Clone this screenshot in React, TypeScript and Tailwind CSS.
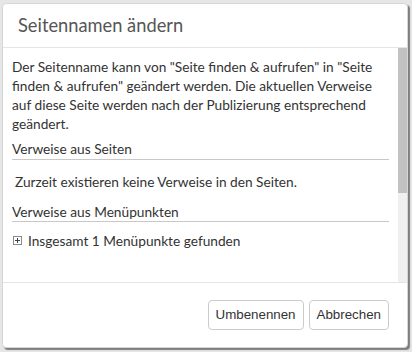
// Rename page dialog: header, scrollable body with reference lists, footer buttons.
export default function App() {
  return (
    <div className="h-[352px] w-[412px] bg-[#e6e6e6] pl-[2px] pt-[3px] font-['Lato',sans-serif]">
      <div className="flex h-[345px] w-[406px] flex-col rounded-[4px] border border-[#d6d6d6] bg-white shadow-[2px_2px_1px_rgba(0,0,0,0.45)]">
        <div className="flex h-[44px] shrink-0 items-center border-b border-[#e5e5e5] px-[15px]">
          <h1 className="text-[18.3px] font-normal text-[#555]">Seitennamen ändern</h1>
        </div>

        <div className="flex h-[235px] shrink-0 overflow-hidden border-b border-[#e5e5e5]">
          <div className="min-w-0 flex-1 pl-[9px] pr-[9px] pt-[9px] text-[13.7px] leading-[19px] text-[#333]">
            <p>
              Der Seitenname kann von "Seite finden &amp; aufrufen" in "Seite finden &amp; aufrufen" geändert werden. Die aktuellen Verweise auf diese Seite werden nach der Publizierung entsprechend geändert.
            </p>
            <h2 className="mt-[6px] border-b border-[#c8c8c8] pb-[1px] text-[13.7px] font-normal">Verweise aus Seiten</h2>
            <p className="mt-[12px] pl-[3px]">Zurzeit existieren keine Verweise in den Seiten.</p>
            <h2 className="mt-[11px] border-b border-[#c8c8c8] pb-[0px] text-[13.7px] font-normal">Verweise aus Menüpunkten</h2>
            <p className="mt-[9px] flex items-center gap-[6px]">
              <svg width="9" height="9" viewBox="0 0 9 9" className="ml-[1px] shrink-0">
                <rect x="0.5" y="0.5" width="8" height="8" fill="#fff" stroke="#8a8a8a" />
                <path d="M2 4.5h5M4.5 2v5" stroke="#444" />
              </svg>
              Insgesamt 1 Menüpunkte gefunden
            </p>
          </div>
          {/* scrollbar */}
          <div className="flex w-[9px] shrink-0 flex-col bg-[#f0f0f0]">
            <div className="h-[145px] bg-[#c2c2c2]" />
          </div>
        </div>

        <div className="flex flex-1 items-center justify-end gap-[5px] pr-[18px] font-['Liberation_Sans',Arial,sans-serif] text-[13.33px] text-[#333]">
          <button className="h-[30px] rounded-[4px] border border-[#ccc] bg-white px-[7px]">Umbenennen</button>
          <button className="h-[30px] rounded-[4px] border border-[#ccc] bg-white px-[7px]">Abbrechen</button>
        </div>
      </div>
    </div>
  );
}
